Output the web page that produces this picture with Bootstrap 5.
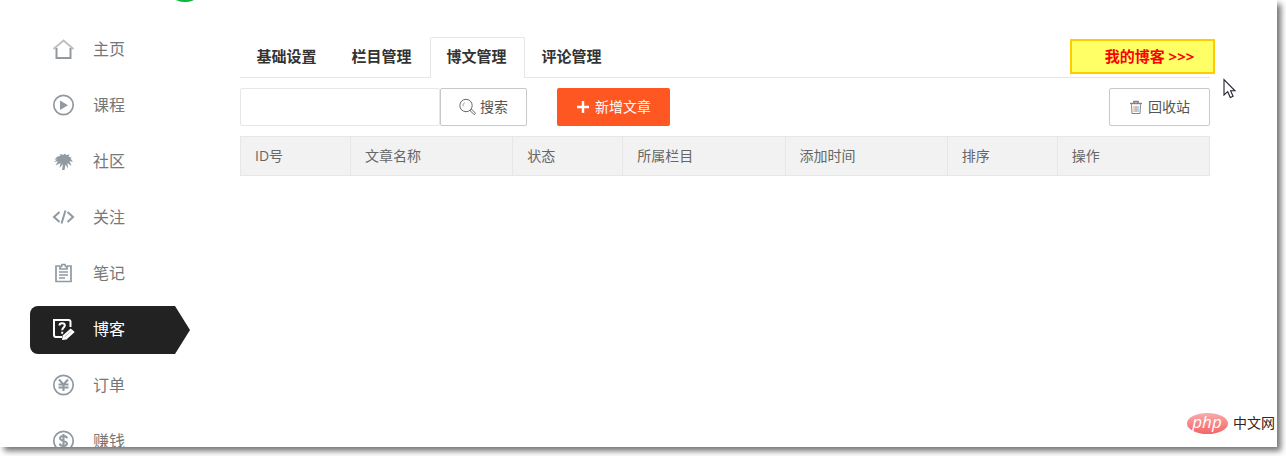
<!DOCTYPE html>
<html lang="zh-CN">
<head>
<meta charset="utf-8">
<meta name="viewport" content="width=device-width, initial-scale=1">
<title>博文管理</title>
<link href="https://cdn.jsdelivr.net/npm/bootstrap@5.3.0/dist/css/bootstrap.min.css" rel="stylesheet">
<script src="https://cdn.jsdelivr.net/npm/bootstrap@5.3.0/dist/js/bootstrap.bundle.min.js" defer></script>
<style>
body{font-family:"Open Sans","Noto Sans CJK SC",sans-serif;font-size:14px;line-height:20px;color:#666;background:#fff;height:100vh;overflow:hidden}
.frame{height:calc(100vh - 9px);margin-right:9px;background:#fff;box-shadow:4px 4px 6px rgba(0,0,0,.55)}
.side{width:160px;margin-left:30px;padding-top:26px}
.avatar{width:42px;height:42px;left:134px;top:-40px;background:#0bb73f}
.side .nav-link{height:48px;padding:0 0 2px 22px;font-size:16px;color:#777;gap:18px}
.side .nav-link svg{width:23px;height:24px;color:#9199a1;flex:none}
.side .nav-link.active{color:#fff;background:#222;border-radius:8px 0 0 8px;clip-path:polygon(0 0,145px 0,100% 50%,145px 100%,0 100%)}
.side .nav-link.active svg{color:#fff}
.main{margin-left:50px;margin-right:67px;padding-top:37px}
.tabbar{border-bottom:1px solid #e6e6e6;height:41px}
.tabbar .nav-link{width:95px;height:41px;padding:0 2px 4px 0;font-size:15px;font-weight:600;color:#333;border:1px solid transparent;border-bottom:0;border-radius:2px 2px 0 0}
.tabbar .nav-link.active{background:#fff;border-color:#e6e6e6}
.myblog{width:145px;height:35px;margin:2px -5px 0 0;padding:0 0 2px 14px;border:2px solid #fc0;background:#ff6;color:#f00;font-size:15px;font-weight:700}
.tools{margin:10px 0}
.tools .form-control{width:200px;height:38px;border:1px solid #e6e6e6;border-radius:2px;font-size:14px}
.tools .btn{height:38px;padding:0 18px;border-radius:2px;font-size:14px;line-height:20px;gap:4px}
.tools .btn-plain{border:1px solid #c9c9c9;color:#555;background:#fff}
.tools .btn-add{margin-left:30px;padding-right:19px;border:0;color:#fff;background:#ff5722}
.tools .btn-bin{padding-right:19px}
.heads{table-layout:fixed;border:1px solid #e6e6e6}
.heads th{height:39px;padding:0 14px;background:#f2f2f2;border:1px solid #e6e6e6;color:#666;font-weight:400;vertical-align:middle}
.w-s{width:11.35%}.w-l{width:16.75%}
.sitemark{right:9px;bottom:20px;width:91px;height:26px}
.cursor{right:40px;top:78px;width:14px;height:21px}
</style>
</head>
<body>
<div class="frame position-relative">
 <div class="d-flex h-100 overflow-hidden position-relative">
  <aside class="side flex-shrink-0 position-relative">
   <div class="avatar rounded-circle position-absolute"></div>
   <nav class="nav flex-column flex-nowrap gap-2">
    <a class="nav-link d-flex align-items-center" href="#"><svg viewBox="0 0 23 24" fill="none" stroke="currentColor" stroke-width="2"><path d="M1.500 12 11.500 3.500 21.500 12" stroke="#bcc1c5"/><path d="M4.500 11v10h14V11"/></svg>主页</a>
    <a class="nav-link d-flex align-items-center" href="#"><svg viewBox="0 0 23 24" fill="none" stroke="currentColor" stroke-width="1.700"><circle cx="11.500" cy="12" r="9.700"/><path d="M8 7.500v9.500l8-4.700z" fill="currentColor" stroke="none"/></svg>课程</a>
    <a class="nav-link d-flex align-items-center" href="#"><svg viewBox="0 0 23 24" fill="currentColor"><path d="M2.500 10.500 5.500 7.500 8.500 7 7.500 5.200 11.500 5.700 13 4.500 14 6 17.500 5.600 16.500 7.500 20 9 18.500 9.500 21 13 17.500 12 19.500 17 15.500 14 16 19.500 13.500 15.500 12.500 21H10l1-6-3.500 4 1-5-5 2.500L6 12.200 2 13l3-2.500z"/></svg>社区</a>
    <a class="nav-link d-flex align-items-center" href="#"><svg viewBox="0 0 23 24" fill="none" stroke="currentColor" stroke-width="2"><path d="M7.500 7 2 12l5.500 5M15.500 7l5.500 5-5.500 5M13.500 5.500 9.500 18.500"/></svg>关注</a>
    <a class="nav-link d-flex align-items-center" href="#"><svg viewBox="0 0 23 24" fill="none" stroke="currentColor" stroke-width="1.700"><path d="M8 5H4v15.500h15V5h-4"/><path d="M8 8V5.500h1.500L10 3.500h3l.5 2H15V8z"/><path d="M7 11h9M7 14h9M7 17h6" stroke-width="1.300"/></svg>笔记</a>
    <a class="nav-link active d-flex align-items-center" aria-current="page" href="#"><svg viewBox="0 0 23 24" fill="none" stroke="currentColor" stroke-width="2"><path d="M18.500 10V5a2 2 0 0 0-2-2H2v15a2 2 0 0 0 2 2h6"/><path d="M7.500 8.500C7.500 5.500 12.800 5.500 12.800 8.500 12.800 10.500 10.200 10.700 10.200 13.200M10.200 14.700v2"/><path d="m10 23 .7-4.500 8-7 4 3.500-8.200 7.500z" fill="currentColor" stroke="none"/><path d="m12.500 20 7-6" stroke="#999" stroke-width=".700"/></svg>博客</a>
    <a class="nav-link d-flex align-items-center" href="#"><svg viewBox="0 0 23 24" fill="none" stroke="currentColor" stroke-width="1.700"><circle cx="11.500" cy="12" r="9.700"/><path d="m7 6.500 4.500 5L16 6.500M11.500 11.500V18M6.500 11.500h10M6.500 14.500h10" stroke-width="2"/></svg>订单</a>
    <a class="nav-link d-flex align-items-center" href="#"><svg viewBox="0 0 23 24" fill="none" stroke="currentColor" stroke-width="1.700"><circle cx="11.500" cy="12" r="9.700"/><path d="M15 9.300C14.500 6 8 6.200 8 9.300s7 2.200 7 5.200-6.700 3.500-7.200 0M11.500 5v14" stroke-width="2"/></svg>赚钱</a>
   </nav>
  </aside>
  <main class="main flex-grow-1">
   <div class="tabbar d-flex justify-content-between align-items-start">
    <nav class="nav flex-nowrap">
     <a class="nav-link d-flex align-items-center justify-content-center" href="#">基础设置</a>
     <a class="nav-link d-flex align-items-center justify-content-center" href="#">栏目管理</a>
     <a class="nav-link active d-flex align-items-center justify-content-center" aria-current="page" href="#">博文管理</a>
     <a class="nav-link d-flex align-items-center justify-content-center" href="#">评论管理</a>
    </nav>
    <a class="myblog d-flex align-items-center justify-content-center text-decoration-none" href="#">我的博客 &gt;&gt;&gt;</a>
   </div>
   <form class="tools d-flex" onsubmit="return false">
    <input class="form-control" type="text" aria-label="搜索文章">
    <button class="btn btn-plain d-flex align-items-center" type="submit"><svg width="17" height="18" viewBox="0 0 17 18" fill="none" stroke="#666"><circle cx="7" cy="7.500" r="6.200"/><path d="M4 8.500A3.500 3.500 0 0 1 6 4.500" stroke="#aaa"/><path d="m11.500 12 1-.8 4 4-1.300 1.500-4-4z"/></svg>搜索</button>
    <button class="btn btn-add d-flex align-items-center" type="button"><svg width="16" height="16" viewBox="0 0 16 16" stroke="#fff" stroke-width="2.400"><path d="M8 2v12M2 8h12"/></svg>新增文章</button>
    <button class="btn btn-plain btn-bin d-flex align-items-center ms-auto" type="button"><svg width="16" height="16" viewBox="0 0 16 16" fill="none" stroke="#847f87"><path d="M2 4.500h12M6 4V2.500h4V4" stroke-width="1.700"/><path d="M3.500 5.500 4 14.500h8l.5-9"/><path d="M6 7v6" stroke="#d9a27c"/><path d="M8 7v6"/><path d="M10 7v6" stroke="#82a8ce"/></svg>回收站</button>
   </form>
   <table class="heads w-100">
    <thead><tr><th class="w-s" scope="col">ID号</th><th class="w-l" scope="col">文章名称</th><th class="w-s" scope="col">状态</th><th class="w-l" scope="col">所属栏目</th><th class="w-l" scope="col">添加时间</th><th class="w-s" scope="col">排序</th><th scope="col">操作</th></tr></thead>
   </table>
  </main>
 </div>
 <svg class="cursor position-absolute" viewBox="0 0 14 21"><path d="M1 1.500V17l3.700-3.300L7.300 19.500l2.800-1.200-2.500-5.500H12z" fill="#fff" stroke="#223" stroke-width="1.100"/></svg>
</div>
<svg class="sitemark position-absolute" viewBox="0 0 91 26" role="img" aria-label="php中文网">
 <defs><linearGradient id="pink" x2="0" y2="1"><stop stop-color="#f9aaaa"/><stop offset="1" stop-color="#f46565"/></linearGradient></defs>
 <ellipse cx="21.500" cy="13.500" rx="20.500" ry="10.500" fill="url(#pink)"/>
 <text x="21" y="18" text-anchor="middle" font-family="Open Sans,sans-serif" font-style="italic" font-size="17" fill="#fff">php</text>
 <text x="47" y="18" font-family="Noto Sans CJK SC,sans-serif" font-size="14" fill="#322">中文网</text>
</svg>
</body>
</html>
